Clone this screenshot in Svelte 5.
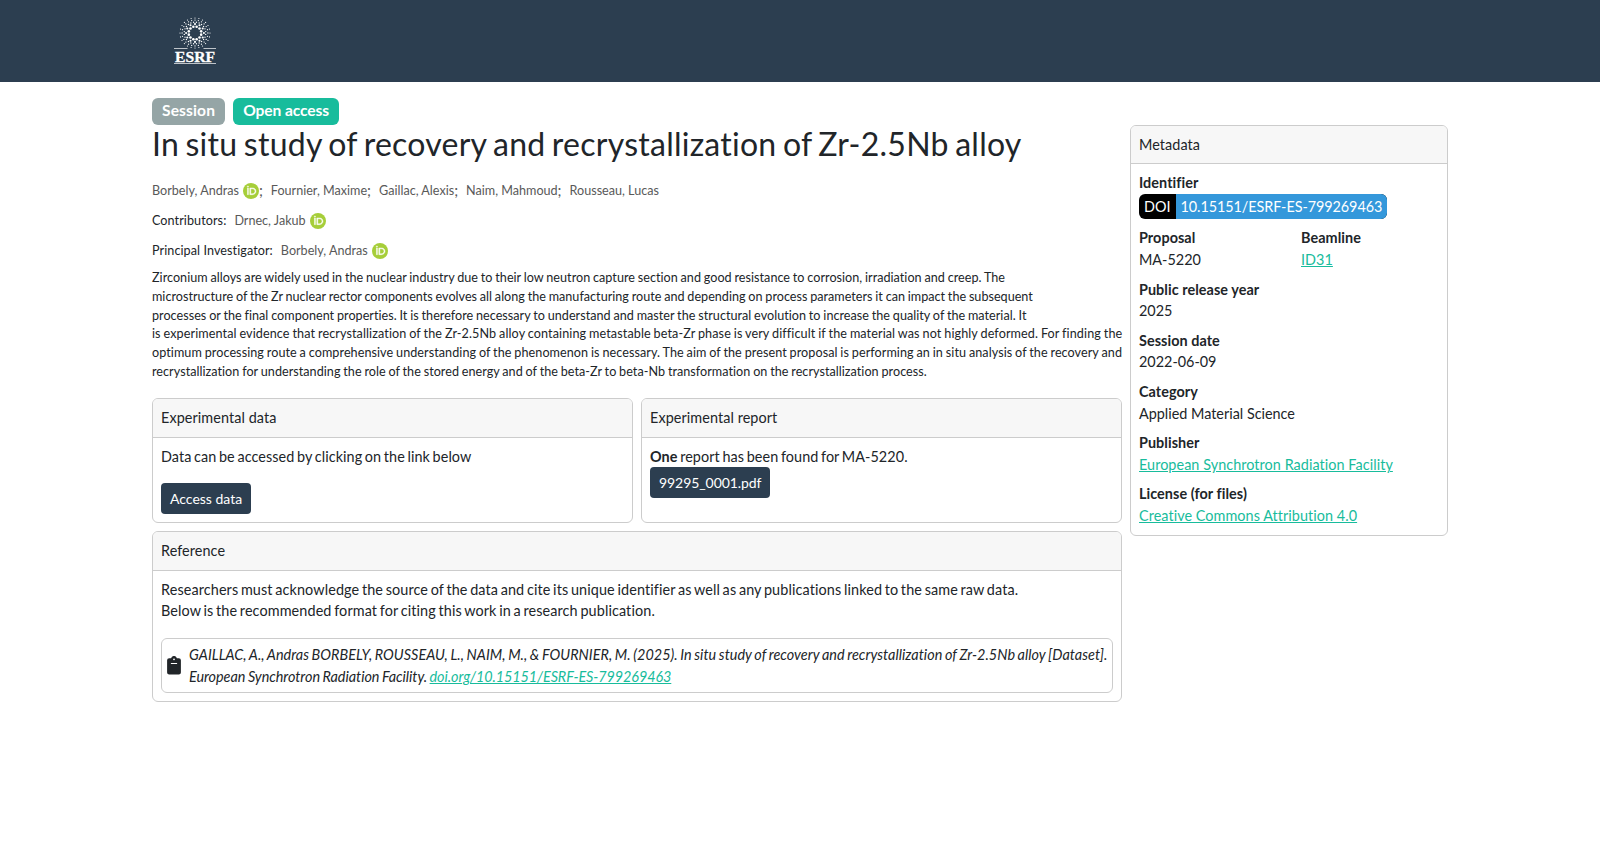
<svelte:head>
  <title>ESRF Data Portal</title>
</svelte:head>

{#snippet orcid()}
  <svg class="orcid" viewBox="0 0 256 256" aria-label="ORCID">
    <circle cx="128" cy="128" r="128" fill="#a6ce39" />
    <g fill="#fff" stroke="#fff" stroke-width="7">
      <path d="M71 79h15.500v107.500h-15.500z" />
      <circle cx="78.700" cy="56.800" r="10.200" />
      <path
        fill-rule="evenodd"
        d="M109 79h41.500c39.600 0 57 28.300 57 53.800 0 27.700-21.700 53.800-56.800 53.800H109zm15.500 93.700h24.400c34.900 0 42.900-26.500 42.900-39.900 0-21.500-13.700-39.800-43.700-39.800h-23.600z"
      />
    </g>
  </svg>
{/snippet}

<header>
  <div class="container">
    <svg class="logo" width="44" height="50" viewBox="0 0 44 50" aria-label="ESRF">
      {#each rings as ring}
        {#each spread(ring) as dot}
          <circle cx={dot.x} cy={dot.y} r={ring.size} fill="#fff" />
        {/each}
      {/each}
      <path d="M1 32.500h13.500M30.500 32.500h12.500M1 47.500h42" stroke="#fff" stroke-width="0.700" />
      <text x="2" y="45.900" textLength="40" lengthAdjust="spacingAndGlyphs">ESRF</text>
    </svg>
  </div>
</header>

<main class="container">
  <div class="badges">
    <span class="badge">Session</span>
    <span class="badge open">Open access</span>
  </div>

  <div class="layout">
    <div class="content">
      <h1>In situ study of recovery and recrystallization of Zr-2.5Nb alloy</h1>

      <div class="people">
        {#each authors as author, i}
          <span class="person">
            <span class="name">{author.name}</span>{#if author.orcid}{@render orcid()}{/if}{#if i < authors.length - 1}<span class="sep">;</span>{/if}
          </span>
        {/each}
      </div>
      <div class="people">
        <span class="role">Contributors:</span>
        <span class="person"><span class="name">Drnec, Jakub</span>{@render orcid()}</span>
      </div>
      <div class="people">
        <span class="role">Principal Investigator:</span>
        <span class="person"><span class="name">Borbely, Andras</span>{@render orcid()}</span>
      </div>

      <p class="abstract">
        {#each abstract as line}
          <span style="letter-spacing: {line.spacing}px">{line.text}</span><br />
        {/each}
      </p>

      <div class="cards">
        <section class="card">
          <h2>Experimental data</h2>
          <div class="body">
            <p>Data can be accessed by clicking on the link below</p>
            <button class="access">Access data</button>
          </div>
        </section>
        <section class="card">
          <h2>Experimental report</h2>
          <div class="body">
            <p><strong>One</strong> report has been found for MA-5220.</p>
            <button class="report">99295_0001.pdf</button>
          </div>
        </section>
      </div>

      <section class="card reference">
        <h2>Reference</h2>
        <div class="body">
          <p>
            Researchers must acknowledge the source of the data and cite its unique identifier as well as any publications linked to the same raw data.<br />
            Below is the recommended format for citing this work in a research publication.
          </p>
          <div class="citation">
            <svg class="clipboard" width="14" height="19" viewBox="0 0 14 19">
              <path
                fill="#212529"
                d="M2.200 2.200h1.900a3 3 0 0 1 5.800 0h1.900a2.100 2.100 0 0 1 2.100 2.100v12.100a2.100 2.100 0 0 1-2.100 2.100H2.200a2.100 2.100 0 0 1-2.100-2.100V4.300a2.100 2.100 0 0 1 2.100-2.100z"
              />
              <circle cx="7" cy="3.300" r="0.900" fill="#fff" />
              <path d="M3.900 7.500h6.200" stroke="#fff" stroke-width="1" />
            </svg>
            <em>
              GAILLAC, A., Andras BORBELY, ROUSSEAU, L., NAIM, M., &amp; FOURNIER, M. (2025). In situ study of recovery and recrystallization of Zr-2.5Nb alloy [Dataset].<br />
              <span class="publisher">European Synchrotron Radiation Facility.</span> <a href="#doi">doi.org/10.15151/ESRF-ES-799269463</a>
            </em>
          </div>
        </div>
      </section>
    </div>

    <aside class="card">
      <h2>Metadata</h2>
      <dl>
        <div class="field identifier">
          <dt>Identifier</dt>
          <dd class="doi"><span>DOI</span><span class="number">10.15151/ESRF-ES-799269463</span></dd>
        </div>
        <div class="pair">
          <div class="field">
            <dt>Proposal</dt>
            <dd>MA-5220</dd>
          </div>
          <div class="field">
            <dt>Beamline</dt>
            <dd><a href="#id31">ID31</a></dd>
          </div>
        </div>
        {#each metadata as item}
          <div class="field">
            <dt>{item.label}</dt>
            <dd>
              {#if item.link}<a href="#link">{item.value}</a>{:else}{item.value}{/if}
            </dd>
          </div>
        {/each}
      </dl>
    </aside>
  </div>
</main>

<script lang="ts">
  type Ring = { radius: number; count: number; size: number; offset: number };

  const authors = [
    { name: "Borbely, Andras", orcid: true },
    { name: "Fournier, Maxime", orcid: false },
    { name: "Gaillac, Alexis", orcid: false },
    { name: "Naim, Mahmoud", orcid: false },
    { name: "Rousseau, Lucas", orcid: false }
  ];

  const abstract = [
    {
      text: "Zirconium alloys are widely used in the nuclear industry due to their low neutron capture section and good resistance to corrosion, irradiation and creep. The",
      spacing: 0.028
    },
    {
      text: "microstructure of the Zr nuclear rector components evolves all along the manufacturing route and depending on process parameters it can impact the subsequent",
      spacing: 0.014
    },
    {
      text: "processes or the final component properties. It is therefore necessary to understand and master the structural evolution to increase the quality of the material. It",
      spacing: 0.028
    },
    {
      text: "is experimental evidence that recrystallization of the Zr-2.5Nb alloy containing metastable beta-Zr phase is very difficult if the material was not highly deformed. For finding the",
      spacing: 0.1
    },
    {
      text: "optimum processing route a comprehensive understanding of the phenomenon is necessary. The aim of the present proposal is performing an in situ analysis of the recovery and",
      spacing: 0.067
    },
    {
      text: "recrystallization for understanding the role of the stored energy and of the beta-Zr to beta-Nb transformation on the recrystallization process.",
      spacing: 0.038
    }
  ];

  const metadata = [
    { label: "Public release year", value: "2025", link: false },
    { label: "Session date", value: "2022-06-09", link: false },
    { label: "Category", value: "Applied Material Science", link: false },
    { label: "Publisher", value: "European Synchrotron Radiation Facility", link: true },
    { label: "License (for files)", value: "Creative Commons Attribution 4.0", link: true }
  ];

  const rings: Ring[] = [
    { radius: 6.4, count: 12, size: 1.3, offset: 0.5 },
    { radius: 8.9, count: 12, size: 1.05, offset: 0 },
    { radius: 10.8, count: 24, size: 0.7, offset: 0.5 },
    { radius: 12.9, count: 24, size: 0.65, offset: 0 },
    { radius: 15, count: 24, size: 0.6, offset: 0 }
  ];

  function spread(ring: Ring) {
    return Array.from({ length: ring.count }, (_, i) => {
      const angle = ((i + ring.offset) * 2 * Math.PI) / ring.count;
      return { x: 22 + ring.radius * Math.sin(angle), y: 17 - ring.radius * Math.cos(angle) };
    });
  }
</script>

<style>
  :global(body) {
    margin: 0;
    background: #fff;
    color: #212529;
    font-family: Lato, sans-serif;
    font-size: 14.400px;
    font-variant-ligatures: none;
    line-height: 1.5;
  }

  .container {
    width: 1296px;
    margin: 0 auto;
  }

  header {
    height: 82px;
    background: #2c3e50;
  }

  .logo {
    display: block;
    padding: 16px 0 0 21px;
  }

  .logo text {
    font-family: "Liberation Serif", serif;
    font-size: 15.500px;
    font-weight: 700;
    fill: #fff;
    stroke: #fff;
    stroke-width: 0.300;
  }

  .badges {
    display: flex;
    gap: 8px;
    height: 27px;
    padding-top: 16px;
  }

  .badge {
    padding: 0 10px;
    border-radius: 6px;
    background: #95a5a6;
    color: #fff;
    font-size: 15.600px;
    font-weight: 700;
    letter-spacing: 0.120px;
    line-height: 25px;
  }

  .badge.open {
    background: #18bc9c;
    letter-spacing: -0.090px;
  }

  .layout {
    display: grid;
    grid-template-columns: 970px 318px;
    gap: 8px;
    align-items: start;
  }

  h1 {
    margin: 0 0 28px;
    font-size: 32px;
    font-weight: 400;
    letter-spacing: 0.250px;
    line-height: 38px;
    word-spacing: -2px;
  }

  .people {
    display: flex;
    align-items: flex-start;
    gap: 8px;
    height: 30px;
    font-size: 12.600px;
    line-height: 1;
  }

  .person {
    display: flex;
    align-items: center;
    height: 0;
    color: #595959;
  }

  .people .role {
    display: flex;
    align-items: center;
    height: 0;
    letter-spacing: 0.080px;
  }

  .sep {
    margin-top: -2px;
    font-size: 15px;
  }

  .orcid {
    width: 16px;
    height: 16px;
    margin-left: 4px;
  }

  .abstract {
    height: 113px;
    margin: -12px 0 16px;
    font-size: 12.600px;
    line-height: 18.800px;
    white-space: nowrap;
    word-spacing: -0.450px;
  }

  .cards {
    display: grid;
    grid-template-columns: 1fr 1fr;
    gap: 8px;
    margin-bottom: 8px;
  }

  .card {
    box-sizing: border-box;
    border: 1px solid #ccc;
    border-radius: 6px;
    overflow: hidden;
  }

  h2 {
    margin: 0;
    padding: 8px;
    border-bottom: 1px solid #ccc;
    background: #f7f7f7;
    font-size: inherit;
    font-weight: 400;
    letter-spacing: 0.080px;
    line-height: 21.600px;
  }

  .cards .card {
    height: 125px;
  }

  .body {
    padding: 8px;
  }

  .body p {
    margin: 0;
    letter-spacing: 0.080px;
    line-height: 21.600px;
    white-space: nowrap;
    word-spacing: -1.150px;
  }

  .reference .body p {
    letter-spacing: 0.115px;
  }

  button {
    display: block;
    height: 31px;
    padding: 0 9px;
    border: none;
    border-radius: 4px;
    background: #2c3e50;
    color: #fff;
    font: inherit;
    font-size: 14px;
  }

  .access {
    margin-top: 16px;
  }

  .report {
    letter-spacing: -0.070px;
  }

  .reference {
    height: 171px;
  }

  .citation {
    display: flex;
    align-items: center;
    gap: 8px;
    box-sizing: border-box;
    height: 55px;
    margin-top: 16px;
    padding: 0 5px;
    border: 1px solid #ccc;
    border-radius: 6px;
    letter-spacing: 0.045px;
    line-height: 22px;
    white-space: nowrap;
    word-spacing: -0.850px;
  }

  .citation em {
    padding-top: 2px;
  }

  .citation .publisher {
    letter-spacing: -0.030px;
  }

  .citation a {
    letter-spacing: -0.085px;
  }

  .clipboard {
    flex-shrink: 0;
  }

  a {
    color: #18bc9c;
  }

  aside {
    height: 411px;
  }

  aside h2 {
    padding-bottom: 7px;
  }

  dl {
    margin: 0;
    padding: 8px;
  }

  .field {
    height: 51.200px;
    line-height: 21.600px;
  }

  .field a {
    letter-spacing: 0.060px;
  }

  .field.identifier {
    height: 55px;
  }

  .pair {
    display: grid;
    grid-template-columns: 162px 1fr;
    height: 52px;
  }

  .identifier dd,
  .pair dd {
    margin-top: 1px;
  }

  dt {
    font-weight: 700;
    letter-spacing: 0.060px;
  }

  dd {
    margin: 0;
  }

  .doi {
    display: inline-flex;
    height: 25px;
    border-radius: 6px;
    background: #000;
    color: #fff;
    line-height: 25px;
    overflow: hidden;
  }

  .doi span {
    padding: 0 5px;
  }

  .doi .number {
    background: #3498db;
    letter-spacing: -0.060px;
  }
</style>
